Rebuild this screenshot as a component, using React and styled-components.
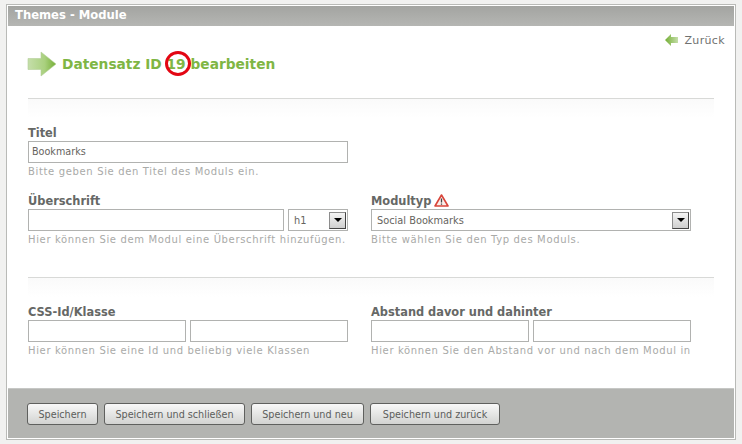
import React from "react";
import styled, { createGlobalStyle } from "styled-components";

const GlobalStyle = createGlobalStyle`
  html, body {
    margin: 0;
    padding: 0;
    background: #f1f1f0;
  }
  * {
    box-sizing: border-box;
  }
`;

const Page = styled.div`
  width: 742px;
  height: 444px;
  padding: 4px 6px 3px 6px;
  font-family: "DejaVu Sans", Verdana, sans-serif;
  overflow: hidden;
`;

const Win = styled.div`
  height: 436px;
  border: 1px solid #b9bab7;
  background: #fff;
  padding: 1px;
  display: flex;
  flex-direction: column;
`;

const TitleBar = styled.div`
  height: 20px;
  background: linear-gradient(#a3a4a1, #b5b6b3);
  color: #fff;
  font-weight: bold;
  font-size: 11.6px;
  line-height: 18px;
  padding-left: 7px;
`;

const Content = styled.div`
  flex: 1;
  padding: 0 20px;
  display: flex;
  flex-direction: column;
`;

const BackRow = styled.div`
  height: 22px;
  margin-right: -11px;
  display: flex;
  justify-content: flex-end;
  align-items: flex-end;
  gap: 6px;
  font-size: 11px;
  line-height: 14px;
  color: #6f7170;
  letter-spacing: 0.35px;
`;

const Heading = styled.div`
  height: 26px;
  margin-top: 3px;
  margin-left: -1px;
  display: flex;
  align-items: center;
  font-size: 13.75px;
  font-weight: bold;
  color: #7fb644;
  gap: 5px;
`;

const Ringed = styled.span`
  position: relative;
  display: inline-block;
  &::after {
    content: "";
    box-sizing: border-box;
    position: absolute;
    left: -2px;
    top: -5px;
    width: 26px;
    height: 25px;
    border: 3.5px solid #e30613;
    border-radius: 50%;
  }
`;

const Rule = styled.div`
  margin-top: ${(p) => p.$top}px;
  height: 20px;
  border-top: 1px solid #d8d9d7;
  background: linear-gradient(#fafafa, #ffffff);
`;

const Columns = styled.div`
  display: grid;
  grid-template-columns: 320px 320px;
  column-gap: 23px;
  margin-top: ${(p) => p.$top}px;
`;

const Field = styled.div`
  display: flex;
  flex-direction: column;
`;

const Label = styled.div`
  display: flex;
  align-items: center;
  gap: 3px;
  height: 15px;
  font-size: 11.4px;
  font-weight: bold;
  color: #666866;
`;

const Line = styled.div`
  display: flex;
  gap: 4px;
  margin-top: 1px;
`;

const TextBox = styled.div`
  flex: 1;
  height: 22px;
  border: 1px solid #b1b2b0;
  background: #fff;
  font-family: "DejaVu Sans Condensed", "DejaVu Sans", sans-serif;
  font-size: 10.7px;
  line-height: 20px;
  padding-left: 3px;
  color: #66645e;
`;

const SelectBox = styled.div`
  flex: ${(p) => (p.$narrow ? "0 0 60px" : "1")};
  height: 22px;
  border: 1px solid #b1b2b0;
  background: #fff;
  display: flex;
  align-items: center;
  justify-content: space-between;
  padding: 0 1px 0 5px;
  font-family: "DejaVu Sans Condensed", "DejaVu Sans", sans-serif;
  font-size: 10.9px;
  color: #66645e;
`;

const SelectArrow = styled.div`
  width: 17px;
  height: 17px;
  background: linear-gradient(#f4f4f4, #cfcfcf);
  border: 1px solid;
  border-color: #8d8d8d #444 #444 #8d8d8d;
  display: flex;
  align-items: center;
  justify-content: center;
  &::after {
    content: "";
    border-left: 4px solid transparent;
    border-right: 4px solid transparent;
    border-top: 4px solid #000;
  }
`;

const Hint = styled.div`
  height: 16px;
  font-size: 10px;
  line-height: 18px;
  letter-spacing: 0.65px;
  color: #a9aaa8;
  white-space: nowrap;
`;

const Footer = styled.div`
  height: 50px;
  border-top: 1px solid #c6c7c5;
  background: #b3b4b1;
  display: flex;
  align-items: flex-start;
  gap: 6px;
  padding: 14px 0 0 19px;
`;

const Button = styled.div`
  height: 22px;
  width: ${(p) => p.$width}px;
  border: 1px solid #5f605e;
  border-radius: 3px;
  background: linear-gradient(#f8f8f8, #d2d3d1);
  font-family: "DejaVu Sans Condensed", "DejaVu Sans", sans-serif;
  font-size: 10.7px;
  line-height: 21px;
  text-align: center;
  color: #5c5d5b;
`;

function BigArrow() {
  return (
    <svg width="30" height="26" viewBox="0 0 30 26">
      <defs>
        <linearGradient id="bigArrow" x1="0" x2="1" y1="0" y2="0">
          <stop offset="0" stopColor="#c5deaa" />
          <stop offset="0.6" stopColor="#a9d07e" />
          <stop offset="1" stopColor="#74ae34" />
        </linearGradient>
      </defs>
      <path d="M1 7.5H14V1L29 13L14 25V18.5H1Z" fill="url(#bigArrow)" stroke="#b4cf98" strokeWidth="0.6" />
    </svg>
  );
}

function SmallArrow() {
  return (
    <svg width="14" height="15" viewBox="0 0 14 15">
      <defs>
        <linearGradient id="smallArrow" x1="0" x2="1" y1="0" y2="0">
          <stop offset="0" stopColor="#74ae34" />
          <stop offset="1" stopColor="#c5deaa" />
        </linearGradient>
      </defs>
      <path d="M1 7L7 1V4H14V10H7V13Z" fill="url(#smallArrow)" />
    </svg>
  );
}

function WarnIcon() {
  return (
    <svg width="15" height="13" viewBox="0 0 15 13">
      <path d="M7.5 1L14 12H1Z" fill="#fbeeea" stroke="#d8453a" strokeWidth="1.6" strokeLinejoin="round" />
      <path d="M7.5 4.5V8.5M7.5 9.5V10.8" stroke="#444" strokeWidth="1.3" />
    </svg>
  );
}

export default function App() {
  return (
    <>
      <GlobalStyle />
      <Page>
        <Win>
          <TitleBar>Themes - Module</TitleBar>
          <Content>
            <BackRow>
              <SmallArrow />
              Zurück
            </BackRow>
            <Heading>
              <BigArrow />
              <span>
                Datensatz ID <Ringed>19</Ringed> bearbeiten
              </span>
            </Heading>
            <Rule $top={21} />
            <Columns $top={7}>
              <Field>
                <Label>Titel</Label>
                <Line>
                  <TextBox>Bookmarks</TextBox>
                </Line>
                <Hint>Bitte geben Sie den Titel des Moduls ein.</Hint>
              </Field>
            </Columns>
            <Columns $top={14}>
              <Field>
                <Label>Überschrift</Label>
                <Line>
                  <TextBox />
                  <SelectBox $narrow>
                    h1
                    <SelectArrow />
                  </SelectBox>
                </Line>
                <Hint>Hier können Sie dem Modul eine Überschrift hinzufügen.</Hint>
              </Field>
              <Field>
                <Label>
                  Modultyp <WarnIcon />
                </Label>
                <Line>
                  <SelectBox>
                    Social Bookmarks
                    <SelectArrow />
                  </SelectBox>
                </Line>
                <Hint>Bitte wählen Sie den Typ des Moduls.</Hint>
              </Field>
            </Columns>
            <Rule $top={30} />
            <Columns $top={7}>
              <Field>
                <Label>CSS-Id/Klasse</Label>
                <Line>
                  <TextBox />
                  <TextBox />
                </Line>
                <Hint>Hier können Sie eine Id und beliebig viele Klassen</Hint>
              </Field>
              <Field>
                <Label>Abstand davor und dahinter</Label>
                <Line>
                  <TextBox />
                  <TextBox />
                </Line>
                <Hint>Hier können Sie den Abstand vor und nach dem Modul in</Hint>
              </Field>
            </Columns>
          </Content>
          <Footer>
            <Button $width={71}>Speichern</Button>
            <Button $width={141}>Speichern und schließen</Button>
            <Button $width={113}>Speichern und neu</Button>
            <Button $width={130}>Speichern und zurück</Button>
          </Footer>
        </Win>
      </Page>
    </>
  );
}
